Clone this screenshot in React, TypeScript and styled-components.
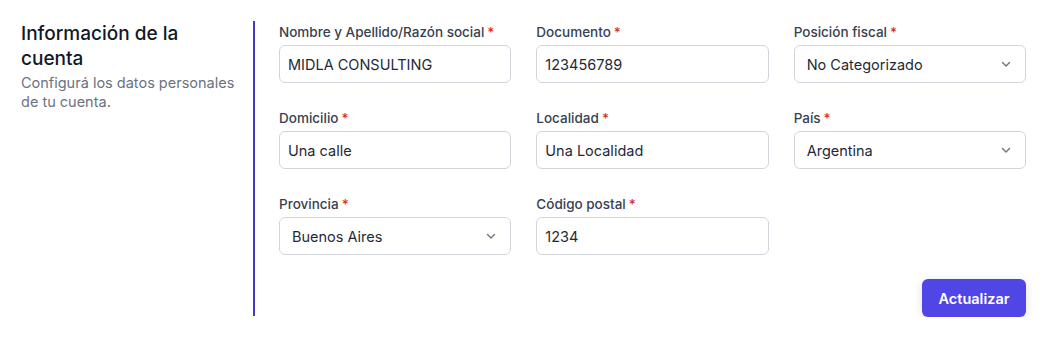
import React from "react";
import styled, { createGlobalStyle } from "styled-components";

const Global = createGlobalStyle`
  html, body { margin: 0; padding: 0; background: #ffffff; }
  body { font-family: Inter, "Noto Sans", sans-serif; }
  * { box-sizing: border-box; }
`;

const Page = styled.div`
  display: flex;
  padding: 21px 21px 0 21px;
  width: 1047px;
`;

const Side = styled.div`
  width: 234px;
  flex: none;
  border-right: 2px solid #4338ca;
  padding-right: 14px;
  height: 295px;
`;

const Title = styled.h2`
  margin: 0;
  font-size: 19px;
  line-height: 25px;
  font-weight: 500;
  color: #111827;
`;

const Subtitle = styled.p`
  margin: 2px 0 0;
  font-size: 14.5px;
  line-height: 19px;
  color: #6b7280;
`;

const Main = styled.div`
  flex: 1;
  padding-left: 24px;
  display: flex;
  flex-direction: column;
`;

const Grid = styled.div`
  display: grid;
  grid-template-columns: repeat(3, 1fr);
  column-gap: 25px;
  row-gap: 25px;
  padding-top: 1px;
`;

const Field = styled.div`
  display: flex;
  flex-direction: column;
  gap: 3px;
`;

const Label = styled.label`
  font-size: 13.5px;
  line-height: 20px;
  font-weight: 500;
  color: #374151;
`;

const Req = styled.span`
  color: #dc2626;
  margin-left: 3px;
`;

const Input = styled.div<{ $select?: boolean }>`
  height: 38px;
  border: 1px solid #d1d5db;
  border-radius: 6px;
  display: flex;
  align-items: center;
  padding: 0 12px 0 ${(p) => (p.$select ? "12px" : "8px")};
  font-size: 14.5px;
  color: #1f2937;
  background: #fff;
`;

const Value = styled.span`
  flex: 1;
`;

const Footer = styled.div`
  display: flex;
  justify-content: flex-end;
  margin-top: 24px;
`;

const Button = styled.button`
  height: 38px;
  width: 104px;
  border: none;
  border-radius: 6px;
  background: #4f46e5;
  color: #fff;
  font-family: inherit;
  font-size: 14.5px;
  font-weight: 600;
  box-shadow: 0 2px 10px rgba(0, 0, 0, 0.12);
`;

const Chevron = () => (
  <svg width="14" height="14" viewBox="0 0 20 20" fill="none" stroke="#6b7280" strokeWidth="2" strokeLinecap="round" strokeLinejoin="round">
    <path d="M5 8l5 5 5-5" />
  </svg>
);

type F = { label: string; value: string; select?: boolean };

const fields: F[] = [
  { label: "Nombre y Apellido/Razón social", value: "MIDLA CONSULTING" },
  { label: "Documento", value: "123456789" },
  { label: "Posición fiscal", value: "No Categorizado", select: true },
  { label: "Domicilio", value: "Una calle" },
  { label: "Localidad", value: "Una Localidad" },
  { label: "País", value: "Argentina", select: true },
  { label: "Provincia", value: "Buenos Aires", select: true },
  { label: "Código postal", value: "1234" },
];

export default function App() {
  return (
    <>
      <Global />
      <Page>
        <Side>
          <Title>Información de la cuenta</Title>
          <Subtitle>Configurá los datos personales de tu cuenta.</Subtitle>
        </Side>
        <Main>
          <Grid>
            {fields.map((f, i) => (
              <Field key={i}>
                <Label>
                  {f.label}
                  <Req>*</Req>
                </Label>
                <Input $select={f.select}>
                  <Value>{f.value}</Value>
                  {f.select && <Chevron />}
                </Input>
              </Field>
            ))}
          </Grid>
          <Footer>
            <Button>Actualizar</Button>
          </Footer>
        </Main>
      </Page>
    </>
  );
}
